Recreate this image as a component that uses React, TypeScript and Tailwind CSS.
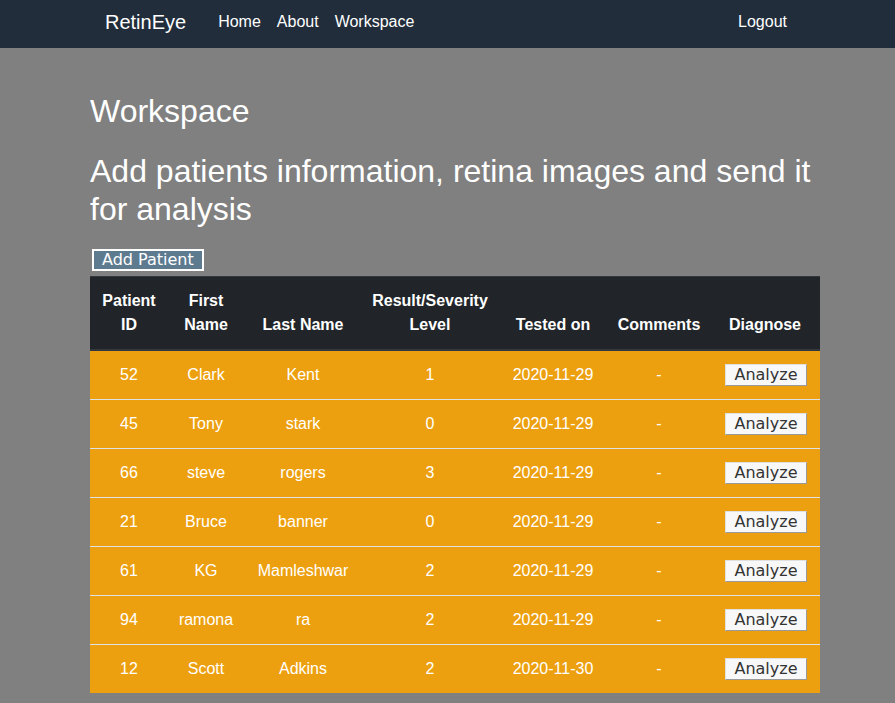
import React from "react";

interface Patient {
  id: number;
  first: string;
  last: string;
  level: number;
  tested: string;
  comments: string;
}

const patients: Patient[] = [
  { id: 52, first: "Clark", last: "Kent", level: 1, tested: "2020-11-29", comments: "-" },
  { id: 45, first: "Tony", last: "stark", level: 0, tested: "2020-11-29", comments: "-" },
  { id: 66, first: "steve", last: "rogers", level: 3, tested: "2020-11-29", comments: "-" },
  { id: 21, first: "Bruce", last: "banner", level: 0, tested: "2020-11-29", comments: "-" },
  { id: 61, first: "KG", last: "Mamleshwar", level: 2, tested: "2020-11-29", comments: "-" },
  { id: 94, first: "ramona", last: "ra", level: 2, tested: "2020-11-29", comments: "-" },
  { id: 12, first: "Scott", last: "Adkins", level: 2, tested: "2020-11-30", comments: "-" },
];

export default function App() {
  return (
    <div className="min-h-[703px] bg-[#808080] font-['Liberation_Sans',Arial,sans-serif] text-white">
      {/* Navbar */}
      <nav className="h-12 bg-[#212d3b] flex items-center pb-[4px]">
        <div className="w-[730px] ml-[90px] flex items-center pl-[15px]">
          <span className="text-[20px] text-white mr-8">RetinEye</span>
          <div className="flex gap-4 text-base text-white">
            <a>Home</a>
            <a>About</a>
            <a>Workspace</a>
          </div>
          <a className="ml-auto mr-[33px] text-base text-white">Logout</a>
        </div>
      </nav>

      <main className="w-[730px] ml-[90px] pt-[44px]">
        <h1 className="text-[32px] leading-[38px] mb-[22px]">Workspace</h1>
        <h2 className="text-[32px] leading-[38px] mb-[20px]">
          Add patients information, retina images and send it for analysis
        </h2>

        <button className="ml-[2px] h-[22px] px-[8px] bg-[#5d7a8f] border-2 border-white text-white text-[16px] leading-[18px] font-['DejaVu_Sans',sans-serif]">
          Add Patient
        </button>

        <table className="mt-[4px] w-full table-fixed border-collapse text-base text-center">
          <colgroup>
            <col className="w-[78px]" />
            <col className="w-[76px]" />
            <col className="w-[118px]" />
            <col className="w-[136px]" />
            <col className="w-[110px]" />
            <col className="w-[102px]" />
            <col className="w-[110px]" />
          </colgroup>
          <thead className="bg-[#212529]">
            <tr className="border-t border-[#32383e] border-b-2 border-b-[#32383e]">
              {["Patient ID", "First Name", "Last Name", "Result/Severity Level", "Tested on", "Comments", "Diagnose"].map((h) => (
                <th key={h} className="font-bold align-bottom py-3 px-2 leading-6">
                  {h}
                </th>
              ))}
            </tr>
          </thead>
          <tbody className="bg-[#eda00f]">
            {patients.map((p, i) => (
              <tr key={p.id} className={i < patients.length - 1 ? "border-b border-[#dee2e6]" : ""}>
                <td className="py-3 leading-6">{p.id}</td>
                <td className="py-3 leading-6">{p.first}</td>
                <td className="py-3 leading-6">{p.last}</td>
                <td className="py-3 leading-6">{p.level}</td>
                <td className="py-3 leading-6">{p.tested}</td>
                <td className="py-3 leading-6">{p.comments}</td>
                <td className="py-3 leading-6 pl-[2px]">
                  <button className="h-[22px] w-[82px] bg-[#f8f8f8] border border-t-[#e0e0e0] border-l-[#e0e0e0] border-r-[#9a9a9a] border-b-[#9a9a9a] text-[#333] text-[16px] leading-[18px] font-['DejaVu_Sans',sans-serif]">
                    Analyze
                  </button>
                </td>
              </tr>
            ))}
          </tbody>
        </table>
      </main>
    </div>
  );
}
